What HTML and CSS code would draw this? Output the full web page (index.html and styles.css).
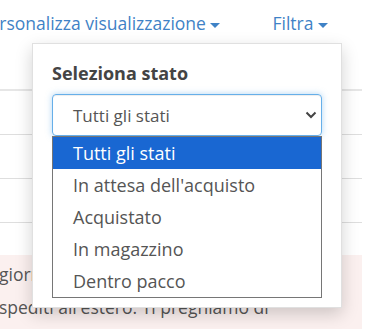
FILE: index.html
```html
<!DOCTYPE html>
<html lang="it">
<head>
    <meta charset="UTF-8">
    <meta name="viewport" content="width=device-width, initial-scale=1.0">
    <title>Ordini</title>
    <link rel="stylesheet" href="styles.css">
</head>
<body>

    <div class="page">
        <!-- Toolbar -->
        <nav class="toolbar">
            <a href="#" class="toolbar-link">Personalizza visualizzazione <span class="caret"></span></a>
            <a href="#" class="toolbar-link">Filtra <span class="caret"></span></a>
        </nav>

        <!-- Table rows behind the menu -->
        <div class="table">
            <div class="row row-head"></div>
            <div class="row"></div>
            <div class="row"></div>
            <div class="row"></div>
        </div>

        <!-- Notice -->
        <div class="alert">
            <p>giorni festivi i pacchi non vengono<br>spediti all'estero. Ti preghiamo di attendere il primo giorno lavorativo.</p>
        </div>

        <!-- Filter dropdown -->
        <div class="filter-menu">
            <h4>Seleziona stato</h4>
            <div class="select">
                <span>Tutti gli stati</span>
                <svg class="chevron" width="12" height="8" viewBox="0 0 12 8">
                    <path d="M1.5 1.5 L6 6 L10.5 1.5" fill="none" stroke="#444" stroke-width="2"/>
                </svg>
            </div>
            <ul class="options">
                <li class="selected">Tutti gli stati</li>
                <li>In attesa dell'acquisto</li>
                <li>Acquistato</li>
                <li>In magazzino</li>
                <li>Dentro pacco</li>
            </ul>
        </div>
    </div>

</body>
</html>
```

FILE: styles.css
```css
body {
    font-family: "Open Sans", Arial, sans-serif;
    margin: 0;
    padding: 0;
    overflow: hidden;
    background: #fff;
    color: #555;
}

.page {
    position: relative;
    width: 375px;
    height: 329px;
    overflow: hidden;
}

/* Toolbar on top */
.toolbar {
    display: flex;
    justify-content: flex-end;
    gap: 52px;
    height: 46px;
    padding: 10px 47px 0 0;
    box-sizing: border-box;
}

.toolbar-link {
    flex-shrink: 0;
    white-space: nowrap;
    font-size: 17.5px;
    line-height: 26px;
    color: #3f82c6;
    text-decoration: none;
}

.caret {
    display: inline-block;
    width: 0;
    height: 0;
    vertical-align: middle;
    border-top: 5px solid #3f82c6;
    border-left: 5px solid transparent;
    border-right: 5px solid transparent;
}

/* Table */
.table {
    width: 362px;
}

.row {
    height: 43px;
    border-bottom: 1px solid #dedede;
}

.row-head {
    border-bottom: 2px solid #e6e6e6;
}

.alert {
    width: 362px;
    height: 75px;
    margin-top: 32px;
    background: #fbf0ef;
    padding-top: 3px;
    box-sizing: border-box;
    overflow: hidden;
}

.alert p {
    width: 334px;
    margin: 0 0 0 -1px;
    font-size: 17.5px;
    line-height: 33px;
    color: #555;
}

/* Dropdown menu */
.filter-menu {
    position: absolute;
    top: 43px;
    left: 32px;
    width: 310px;
    height: 265px;
    box-sizing: border-box;
    padding: 18px 19px 0 19px;
    background: #fff;
    border: 1px solid rgba(0, 0, 0, 0.12);
    box-shadow: 0 6px 16px rgba(0, 0, 0, 0.18);
}

.filter-menu h4 {
    margin: 0 0 10px 0;
    font-size: 18px;
    line-height: 22px;
    font-weight: bold;
    color: #444;
}

.select {
    display: flex;
    align-items: center;
    justify-content: space-between;
    height: 42px;
    box-sizing: border-box;
    padding: 0 4px 0 20px;
    border: 1px solid #66afe9;
    border-radius: 4px;
    box-shadow: inset 0 1px 1px rgba(0, 0, 0, 0.075), 0 0 6px rgba(102, 175, 233, 0.5);
    font-size: 17px;
    color: #555;
}

.options {
    list-style: none;
    margin: 0;
    padding: 0;
    border: 1px solid #767676;
}

.options li {
    height: 32px;
    line-height: 32px;
    padding-left: 20px;
    font-size: 18px;
    color: #555;
}

.options li.selected {
    background: #1967d2;
    color: #fff;
}
```
